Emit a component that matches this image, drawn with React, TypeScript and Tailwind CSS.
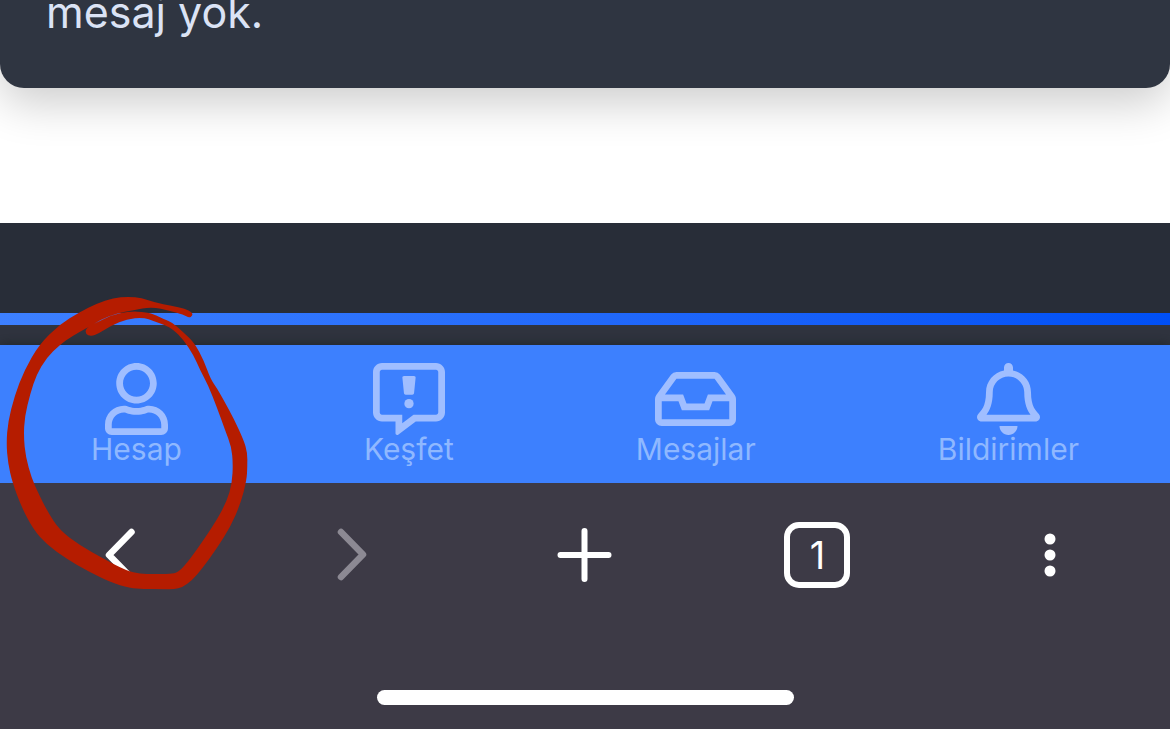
import type { ReactNode } from 'react'
import { FaRegBell, FaRegUser } from 'react-icons/fa'

type Point = [number, number]

// Edge of the marker stroke: outer side first, then back along the inner side
const MARKER_EDGE: Point[] = [
  [576, 67], [555, 56], [515, 47], [465, 38], [425, 24], [385, 20], [340, 24], [290, 41], [240, 66],
  [178, 104], [118, 163], [73, 240], [43, 320], [24, 395], [19, 460], [24, 520], [37, 577],
  [64, 650], [99, 717], [140, 764], [200, 807], [260, 841], [330, 877], [390, 894],
  [430, 897], [480, 897], [522, 898], [547, 892], [577, 870], [607, 835], [650, 776], [691, 711],
  [722, 640], [740, 570], [742, 530], [742, 487], [731, 450], [701, 385], [671, 330],
  [651, 295], [631, 266], [612, 213], [583, 158], [550, 127], [518, 98], [490, 87], [470, 76],
  [440, 66], [385, 64], [335, 76], [292, 96], [258, 114], [256, 132], [274, 139], [298, 129],
  [335, 106], [380, 87], [430, 82], [462, 94], [496, 106], [518, 117], [550, 149], [580, 194],
  [600, 240], [625, 287], [650, 350], [675, 420], [694, 470], [699, 520], [696, 580],
  [681, 632], [650, 691], [600, 765], [560, 821], [532, 848], [512, 852], [460, 852], [420, 852],
  [380, 842], [310, 806], [240, 766], [178, 720], [143, 665], [115, 610], [95, 565],
  [77, 500], [71, 440], [74, 380], [91, 310], [109, 255], [139, 204], [180, 164],
  [215, 139], [260, 114], [305, 88], [350, 70], [400, 61], [455, 50], [510, 63], [550, 74],
  [568, 84], [578, 76],
]

// Closed curve that runs through the midpoints
function smoothPath(points: Point[]) {
  const mid = (a: Point, b: Point) => `${(a[0] + b[0]) / 2} ${(a[1] + b[1]) / 2}`
  const curves = points.map((p, i) => `Q${p[0]} ${p[1]} ${mid(p, points[(i + 1) % points.length])}`)
  return `M${mid(points[points.length - 1], points[0])}${curves.join('')}Z`
}

function DiscoverIcon() {
  return (
    <svg viewBox="0 0 512 512" className="h-[72px] w-[72px]" fill="currentColor" aria-hidden="true">
      <path
        fillRule="evenodd"
        d="M448 0H64C28.7 0 0 28.7 0 64v288c0 35.3 28.7 64 64 64h96v84c0 9.8 11.2 15.5 19.1 9.7L304 416h144c35.3 0 64-28.7 64-64V64c0-35.3-28.7-64-64-64zm16 352c0 8.8-7.2 16-16 16H288l-80 60v-60H64c-8.8 0-16-7.2-16-16V64c0-8.8 7.2-16 16-16h384c8.8 0 16 7.2 16 16v288z"
      />
      <path d="M221 92h70c8 0 13 5 12 13l-11 109c-1 7-6 11-12 11h-48c-6 0-11-4-12-11l-11-109c-1-8 4-13 12-13z" />
      <circle cx="256" cy="289" r="33" />
    </svg>
  )
}

function InboxIcon() {
  return (
    <svg viewBox="0 0 576 512" className="h-[72px] w-[81px]" fill="currentColor" aria-hidden="true">
      <path
        fillRule="evenodd"
        d="M566.8 227.4L462.4 83.8A48 48 0 0 0 423.6 64H152.4a48 48 0 0 0-38.8 19.8L9.2 227.4A48 48 0 0 0 0 255.6V400c0 26.5 21.5 48 48 48h480c26.5 0 48-21.5 48-48V255.6a48 48 0 0 0-9.2-28.2zM152.4 112h271.2l81.4 112H376l-24 64H224l-24-64H71zM528 400H48V272h119l24 64h194l24-64h119z"
      />
    </svg>
  )
}

interface Tab {
  label: string
  icon: ReactNode
}

const tabs: Tab[] = [
  { label: 'Hesap', icon: <FaRegUser className="h-[72px] w-[63px]" /> },
  { label: 'Keşfet', icon: <DiscoverIcon /> },
  { label: 'Mesajlar', icon: <InboxIcon /> },
  { label: 'Bildirimler', icon: <FaRegBell className="h-[72px] w-[63px]" /> },
]

export default function App() {
  return (
    <div className="relative flex min-h-screen flex-col overflow-hidden bg-[#3d3a46] font-['Inter',sans-serif]">
      <main className="flex flex-col bg-white pb-[135px]">
        <section className="-mt-3 rounded-b-3xl bg-[#2f3541] px-[46px] pb-[52px] shadow-[0_15px_45px_rgba(0,0,0,0.2)]">
          <p className="text-[43px] leading-[48px] text-[#dbe3f5]">mesaj yok.</p>
        </section>
      </main>

      {/* Footer strip */}
      <div className="h-[90px] bg-[#282d38]" />
      <div className="h-3 bg-linear-to-r from-[#3d80ff] to-[#004ff5]" />
      <div className="h-5 bg-[#30343f]" />

      {/* Site tabs */}
      <nav className="bg-[#3d80fe] pt-[18px] pb-5 shadow-[0_0_12px_rgba(20,30,30,0.7)]">
        <ul className="flex justify-around">
          {tabs.map((tab) => (
            <li key={tab.label}>
              <a href="#" className="flex flex-col items-center text-[#a0beff]">
                {tab.icon}
                <span className="text-[30px] leading-7 text-[#8fb8ff]">{tab.label}</span>
              </a>
            </li>
          ))}
        </ul>
      </nav>

      {/* Browser toolbar */}
      <div className="relative flex grow flex-col bg-[#3d3a46]">
        <div className="grid h-36 grid-cols-5 place-items-center px-1 text-white">
          <button type="button" aria-label="Geri">
            <svg viewBox="0 0 36 60" className="h-[60px] w-9" fill="none" stroke="currentColor" strokeWidth="6.5" strokeLinecap="round" strokeLinejoin="round">
              <path d="M29.5 7L7 30l22.5 23" />
            </svg>
          </button>
          <button type="button" aria-label="İleri" disabled className="text-[#8c8993]">
            <svg viewBox="0 0 36 60" className="h-[60px] w-9" fill="none" stroke="currentColor" strokeWidth="6.5" strokeLinecap="round" strokeLinejoin="round">
              <path d="M6 7l22 22.5L6 52" />
            </svg>
          </button>
          <button type="button" aria-label="Yeni sekme">
            <svg viewBox="0 0 60 60" className="h-[60px] w-[60px]" fill="none" stroke="currentColor" strokeWidth="6" strokeLinecap="round">
              <path d="M29.500 6v48M5.500 30h48" />
            </svg>
          </button>
          <button
            type="button"
            aria-label="Sekmeler"
            className="flex h-[66px] w-[66px] items-center justify-center rounded-[15px] border-6 border-white text-[38px] leading-none"
          >
            1
          </button>
          <button type="button" aria-label="Menü">
            <svg viewBox="0 0 12 60" className="h-[60px] w-3" fill="currentColor">
              <circle cx="6" cy="14" r="5.5" />
              <circle cx="6" cy="30" r="5.5" />
              <circle cx="6" cy="46" r="5.5" />
            </svg>
          </button>
        </div>
        <div className="mx-auto mt-auto mb-6 h-[15px] w-[417px] rounded-full bg-white" />
      </div>

      {/* Marker drawn round the account tab */}
      <svg viewBox="0 0 780 930" className="pointer-events-none absolute top-[290px] left-0 h-[310px] w-[260px]" aria-hidden="true">
        <path d={smoothPath(MARKER_EDGE)} fill="#b51c00" />
      </svg>
    </div>
  )
}
